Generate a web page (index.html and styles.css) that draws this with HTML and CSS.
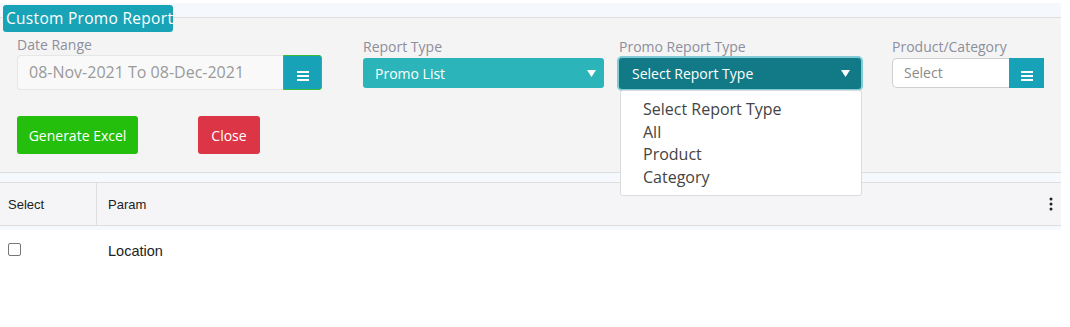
FILE: index.html
```html
<!DOCTYPE html>
<html lang="en">
<head>
<meta charset="utf-8">
<title>Custom Promo Report</title>
<link rel="stylesheet" href="styles.css">
</head>
<body>
<div class="page">
  <div class="top-band"></div>
  <div class="legend">Custom Promo Report</div>
  <section class="panel">
    <div class="fields">
      <div class="field field-date">
        <label class="lbl">Date Range</label>
        <div class="input-group">
          <div class="date-input">08-Nov-2021 To 08-Dec-2021</div>
          <button class="icon-btn date-btn" type="button">
            <svg width="12" height="10" viewBox="0 0 12 10"><rect y="0" width="12" height="2" fill="#fff"/><rect y="4" width="12" height="2" fill="#fff"/><rect y="8" width="12" height="2" fill="#fff"/></svg>
          </button>
        </div>
      </div>
      <div class="field field-report">
        <label class="lbl">Report Type</label>
        <div class="select select-light">
          <span>Promo List</span>
          <svg class="caret" width="9" height="7" viewBox="0 0 9 7"><path d="M0 0H9L4.5 7Z" fill="#fff"/></svg>
        </div>
      </div>
      <div class="field field-promo">
        <label class="lbl">Promo Report Type</label>
        <div class="select select-dark">
          <span>Select Report Type</span>
          <svg class="caret" width="9" height="7" viewBox="0 0 9 7"><path d="M0 0H9L4.5 7Z" fill="#fff"/></svg>
        </div>
        <ul class="dropdown">
          <li>Select Report Type</li>
          <li>All</li>
          <li>Product</li>
          <li>Category</li>
        </ul>
      </div>
      <div class="field field-prod">
        <label class="lbl">Product/Category</label>
        <div class="input-group">
          <div class="prod-input">Select</div>
          <button class="icon-btn prod-btn" type="button">
            <svg width="12" height="10" viewBox="0 0 12 10"><rect y="0" width="12" height="2" fill="#fff"/><rect y="4" width="12" height="2" fill="#fff"/><rect y="8" width="12" height="2" fill="#fff"/></svg>
          </button>
        </div>
      </div>
    </div>
    <div class="actions">
      <button class="btn btn-green" type="button">Generate Excel</button>
      <button class="btn btn-red" type="button">Close</button>
    </div>
  </section>
  <div class="mid-band"></div>
  <div class="table">
    <div class="thead">
      <div class="th col-sel">Select</div>
      <div class="th col-param">Param</div>
      <div class="th col-menu">
        <svg width="4" height="14" viewBox="0 0 4 14"><circle cx="2" cy="2" r="1.5" fill="#222"/><circle cx="2" cy="7" r="1.5" fill="#222"/><circle cx="2" cy="12" r="1.5" fill="#222"/></svg>
      </div>
    </div>
    <div class="thin-band"></div>
    <div class="tr">
      <div class="td col-sel"><span class="checkbox"></span></div>
      <div class="td col-param">Location</div>
    </div>
  </div>
</div>
</body>
</html>
```

FILE: styles.css
```css
* { box-sizing: border-box; }
html, body { margin: 0; padding: 0; background: #fff; }
body { font-family: "Open Sans", "Noto Sans", sans-serif; color: #333; }

.page { width: 1061px; position: relative; }

.top-band {
  height: 18px;
  border-top: 3px solid #fff;
  background: #f5f8fc;
  border-bottom: 1px solid #dedede;
}

.legend {
  position: absolute;
  left: 3px;
  top: 5px;
  width: 170px;
  height: 27px;
  background: #19a3b6;
  color: #fff;
  border-radius: 3px;
  font-size: 15.5px;
  font-weight: 500;
  line-height: 27px;
  padding-left: 3px;
  letter-spacing: 0.3px;
  white-space: nowrap;
  z-index: 2;
}

.panel {
  background: #f4f4f4;
  height: 155px;
  border-bottom: 1px solid #dedede;
  padding: 0 0 0 17px;
}

.fields {
  display: grid;
  grid-template-columns: 346px 255px 274px 152px;
  align-items: start;
}

.field { position: relative; display: flex; flex-direction: column; }

.lbl {
  font-size: 14px;
  color: #8d8f9c;
  line-height: 16px;
  white-space: nowrap;
}

.field-date { padding-top: 19px; }
.field-date .lbl { margin-bottom: 2px; }
.field-report, .field-prod { padding-top: 21px; }
.field-report .lbl, .field-prod .lbl { margin-bottom: 3px; }
.field-promo { padding-top: 21px; margin-left: -1px; }
.field-promo .lbl { margin-left: 2px; margin-bottom: 1px; }

.input-group { display: flex; }

.date-input {
  width: 266px;
  height: 35px;
  background: #f9f9f9;
  border: 1px solid #e6e6e6;
  border-right: 0;
  border-radius: 4px 0 0 4px;
  color: #9a9a9a;
  font-size: 16px;
  line-height: 33px;
  padding-left: 11px;
  white-space: nowrap;
}

.icon-btn {
  border: 0;
  margin: 0;
  padding: 6px 0 0;
  background: #17a2b8;
  display: flex;
  align-items: center;
  justify-content: center;
}

.date-btn {
  width: 39px;
  height: 35px;
  border: 1px solid #3bbb3a;
  border-radius: 0 3px 3px 0;
}

.select {
  height: 30px;
  border-radius: 3px;
  display: flex;
  align-items: center;
  justify-content: space-between;
  color: #fff;
  font-size: 14px;
  font-weight: 500;
  white-space: nowrap;
}

.select-light {
  width: 241px;
  background: #2bb5ba;
  padding: 0 8px 0 12px;
}

.select-dark {
  width: 246px;
  height: 35px;
  background: #127a87;
  border: 2px solid #80cbd5;
  border-radius: 5px;
  padding: 0 11px 0 13px;
}

.caret { display: block; }

.dropdown {
  position: absolute;
  left: 3px;
  top: 72px;
  width: 242px;
  height: 106px;
  margin: 0;
  padding: 7px 0 0 22px;
  list-style: none;
  background: #fff;
  border: 1px solid #dcdcdc;
  border-radius: 3px;
  z-index: 3;
}

.dropdown li {
  font-size: 16px;
  color: #444;
  line-height: 22.7px;
  white-space: nowrap;
}

.prod-input {
  width: 117px;
  height: 30px;
  background: #fff;
  border: 1px solid #cfcfcf;
  border-right: 0;
  border-radius: 5px 0 0 5px;
  color: #8a8a8a;
  font-size: 14px;
  line-height: 28px;
  padding-left: 11px;
}

.prod-btn {
  width: 35px;
  height: 30px;
  padding-top: 5px;
}

.actions {
  display: flex;
  gap: 60px;
  margin-top: 25px;
}

.btn {
  height: 38px;
  border: 0;
  border-radius: 3px;
  color: #fff;
  font-family: "Open Sans", "Noto Sans", sans-serif;
  font-size: 14px;
  font-weight: 500;
  padding: 0;
}

.btn-green { width: 121px; background: #24bf0c; }
.btn-red { width: 62px; background: #dc3545; }

.mid-band {
  height: 10px;
  background: #f5f8fc;
  border-bottom: 1px solid #dedede;
}

.table { font-family: "Liberation Sans", Arial, sans-serif; }

.thead {
  display: flex;
  height: 43px;
  background: #f5f5f8;
  border-bottom: 1px solid #dedede;
}

.th {
  font-size: 13px;
  color: #222;
  display: flex;
  align-items: center;
}

.col-sel { width: 97px; padding-left: 8px; }
.th.col-sel { border-right: 1px solid #dedede; }
.col-param { flex: 1; padding-left: 11px; }
.col-menu { width: 12px; justify-content: flex-start; }

.thin-band { height: 4px; background: #f5f8fc; }

.tr { display: flex; height: 42px; align-items: center; }

.td { font-size: 14.5px; color: #222; }
.td.col-param { padding-left: 11px; }

.checkbox {
  display: block;
  width: 13px;
  height: 13px;
  border: 1px solid #767676;
  border-radius: 2px;
  background: #fff;
  margin-top: -3px;
}
```
